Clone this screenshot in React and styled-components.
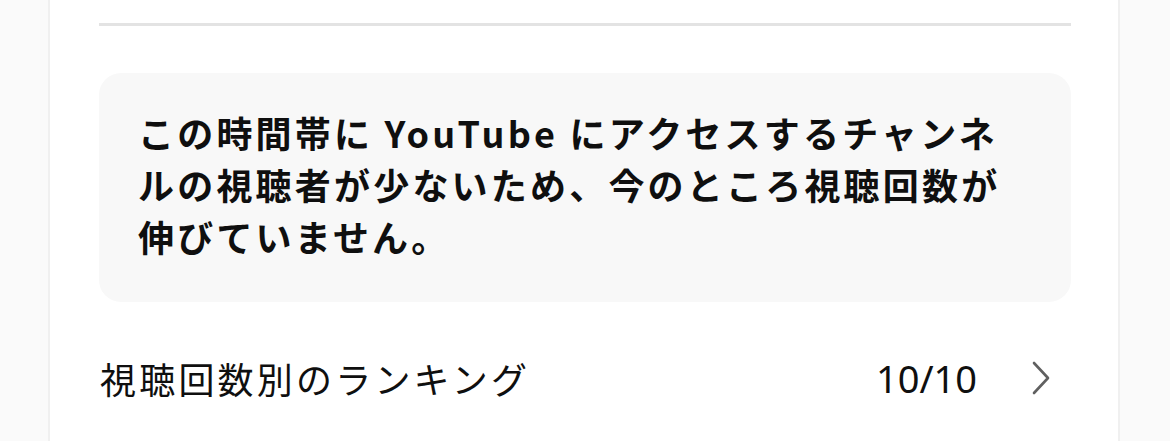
import React from "react";
import styled, { createGlobalStyle } from "styled-components";

const Global = createGlobalStyle`
  html, body { margin: 0; padding: 0; background: #fafafa; }
  body {
    font-family: "Noto Sans CJK JP", "Noto Sans", sans-serif;
    color: #0f0f0f;
    -webkit-font-smoothing: antialiased;
  }
`;

const Page = styled.div`
  display: flex;
  align-items: flex-start;
  height: 441px;
  overflow: hidden;
  padding-left: 48px;
`;

const Card = styled.section`
  width: 972px;
  min-height: 441px;
  background: #ffffff;
  border-left: 2px solid #f0f0f0;
  border-right: 2px solid #f0f0f0;
  padding: 23px 47px 0 49px;
  box-sizing: content-box;
  display: flex;
  flex-direction: column;
  flex-shrink: 0;
  & > * { flex-shrink: 0; }
`;

const Divider = styled.hr`
  margin: 0;
  border: 0;
  height: 3px;
  background: #e3e3e3;
`;

const Notice = styled.div`
  margin-top: 47px;
  background: #f8f8f8;
  border-radius: 22px;
  height: 229px;
  box-sizing: border-box;
  padding: 33px 30px 0 39px;
`;

const NoticeText = styled.p`
  margin: 0;
  font-size: 36px;
  font-weight: 700;
  line-height: 52px;
  letter-spacing: 3.2px;
`;

const Line = styled.span`
  display: block;
  white-space: nowrap;
`;

const Row = styled.div`
  display: flex;
  align-items: center;
  height: 152px;
`;

const RowLabel = styled.div`
  flex: 1;
  font-size: 36px;
  font-weight: 400;
  letter-spacing: 3.2px;
  margin-left: 1px;
`;

const RowValue = styled.div`
  font-family: "Noto Sans", "Noto Sans CJK JP", sans-serif;
  font-size: 38px;
  font-weight: 400;
  color: #0f0f0f;
`;

const Chevron = styled.svg`
  width: 20px;
  height: 34px;
  margin-left: 54px;
  margin-right: 20px;
  flex-shrink: 0;
`;

export default function App() {
  return (
    <>
      <Global />
      <Page>
        <Card>
          <Divider />
          <Notice>
            <NoticeText>
              <Line>この時間帯に YouTube にアクセスするチャンネ</Line>
              <Line>ルの視聴者が少ないため、今のところ視聴回数が</Line>
              <Line>伸びていません。</Line>
            </NoticeText>
          </Notice>
          <Row>
            <RowLabel>視聴回数別のランキング</RowLabel>
            <RowValue>10/10</RowValue>
            <Chevron viewBox="0 0 20 34" fill="none">
              <path d="M3 2 L17 17 L3 32" stroke="#606060" strokeWidth="2.6" strokeLinecap="round" strokeLinejoin="round" />
            </Chevron>
          </Row>
        </Card>
      </Page>
    </>
  );
}
